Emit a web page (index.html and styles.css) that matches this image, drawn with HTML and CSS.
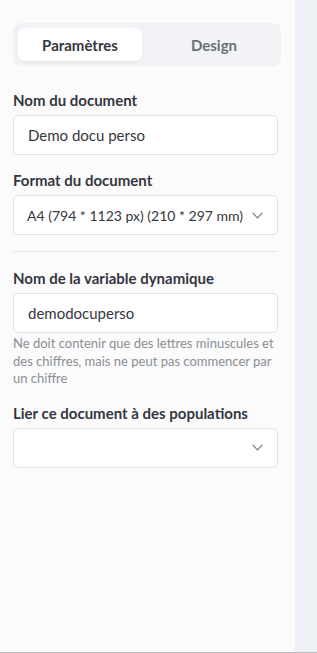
FILE: index.html
```html
<!DOCTYPE html>
<html lang="fr">
<head>
    <meta charset="UTF-8">
    <meta name="viewport" content="width=device-width, initial-scale=1.0">
    <title>Paramètres du document</title>
    <link rel="stylesheet" href="styles.css">
</head>
<body>
    <div class="layout">
        <aside class="panel">
            <div class="tabs">
                <button class="tab active">Paramètres</button>
                <button class="tab">Design</button>
            </div>

            <div class="field">
                <label>Nom du document</label>
                <div class="input">Demo docu perso</div>
            </div>

            <div class="field">
                <label>Format du document</label>
                <div class="input select">
                    <span>A4 (794 * 1123 px) (210 * 297 mm)</span>
                    <svg class="chevron" viewBox="0 0 12 7" width="11" height="7"><path d="M1 1l5 5 5-5" fill="none" stroke="#6b7280" stroke-width="1.2" stroke-linecap="round" stroke-linejoin="round"/></svg>
                </div>
            </div>

            <hr class="divider">

            <div class="field">
                <label>Nom de la variable dynamique</label>
                <div class="input">demodocuperso</div>
                <p class="help">Ne doit contenir que des lettres minuscules et des chiffres, mais ne peut pas commencer par un chiffre</p>
            </div>

            <div class="field">
                <label>Lier ce document à des populations</label>
                <div class="input select">
                    <span></span>
                    <svg class="chevron" viewBox="0 0 12 7" width="11" height="7"><path d="M1 1l5 5 5-5" fill="none" stroke="#6b7280" stroke-width="1.2" stroke-linecap="round" stroke-linejoin="round"/></svg>
                </div>
            </div>
        </aside>
        <div class="canvas"></div>
    </div>
</body>
</html>
```

FILE: styles.css
```css
html, body {
    margin: 0;
    height: 100%;
}
body {
    font-family: Lato, "Noto Sans", sans-serif;
    color: #343741;
    background: #fbfbfc;
}
.layout {
    display: flex;
    height: 652px;
    border-bottom: 1px solid #b9bbbf;
}
.panel {
    width: 295px;
    box-sizing: border-box;
    padding: 23px 17px 0 13px;
    background: #fbfbfc;
}
.canvas {
    flex: 1;
    background: #edf0f4;
}
.tabs {
    display: flex;
    gap: 10px;
    height: 43px;
    box-sizing: border-box;
    padding: 5px;
    margin-right: -3px;
    background: #f1f3f6;
    border-radius: 8px;
}
.tab {
    flex: 1;
    border: none;
    background: none;
    font-family: inherit;
    font-size: 15px;
    font-weight: 700;
    color: #6b6f78;
    border-radius: 6px;
    cursor: pointer;
}
.tab.active {
    background: #fff;
    color: #343741;
    box-shadow: 0 1px 3px rgba(30, 40, 60, 0.08);
}
.field {
    margin-top: 16px;
}
.tabs + .field {
    margin-top: 25px;
}
.divider + .field {
    margin-top: 17px;
}
label {
    display: block;
    font-size: 15px;
    font-weight: 700;
    line-height: 18px;
    margin-bottom: 6px;
    color: #343741;
}
.input {
    height: 40px;
    box-sizing: border-box;
    border: 1px solid #dfe2e7;
    border-radius: 5px;
    background: #fff;
    padding: 0 14px;
    display: flex;
    align-items: center;
    font-size: 15px;
    color: #343741;
}
.input.select {
    justify-content: space-between;
    padding: 0 14px 0 13px;
    font-size: 14px;
}
.chevron {
    flex-shrink: 0;
}
.divider {
    border: none;
    border-top: 1px solid #e6e8ec;
    margin: 16px 0 0;
}
.help {
    margin: 2px 0 0;
    font-size: 13px;
    line-height: 17.5px;
    color: #8a8e96;
}
```
